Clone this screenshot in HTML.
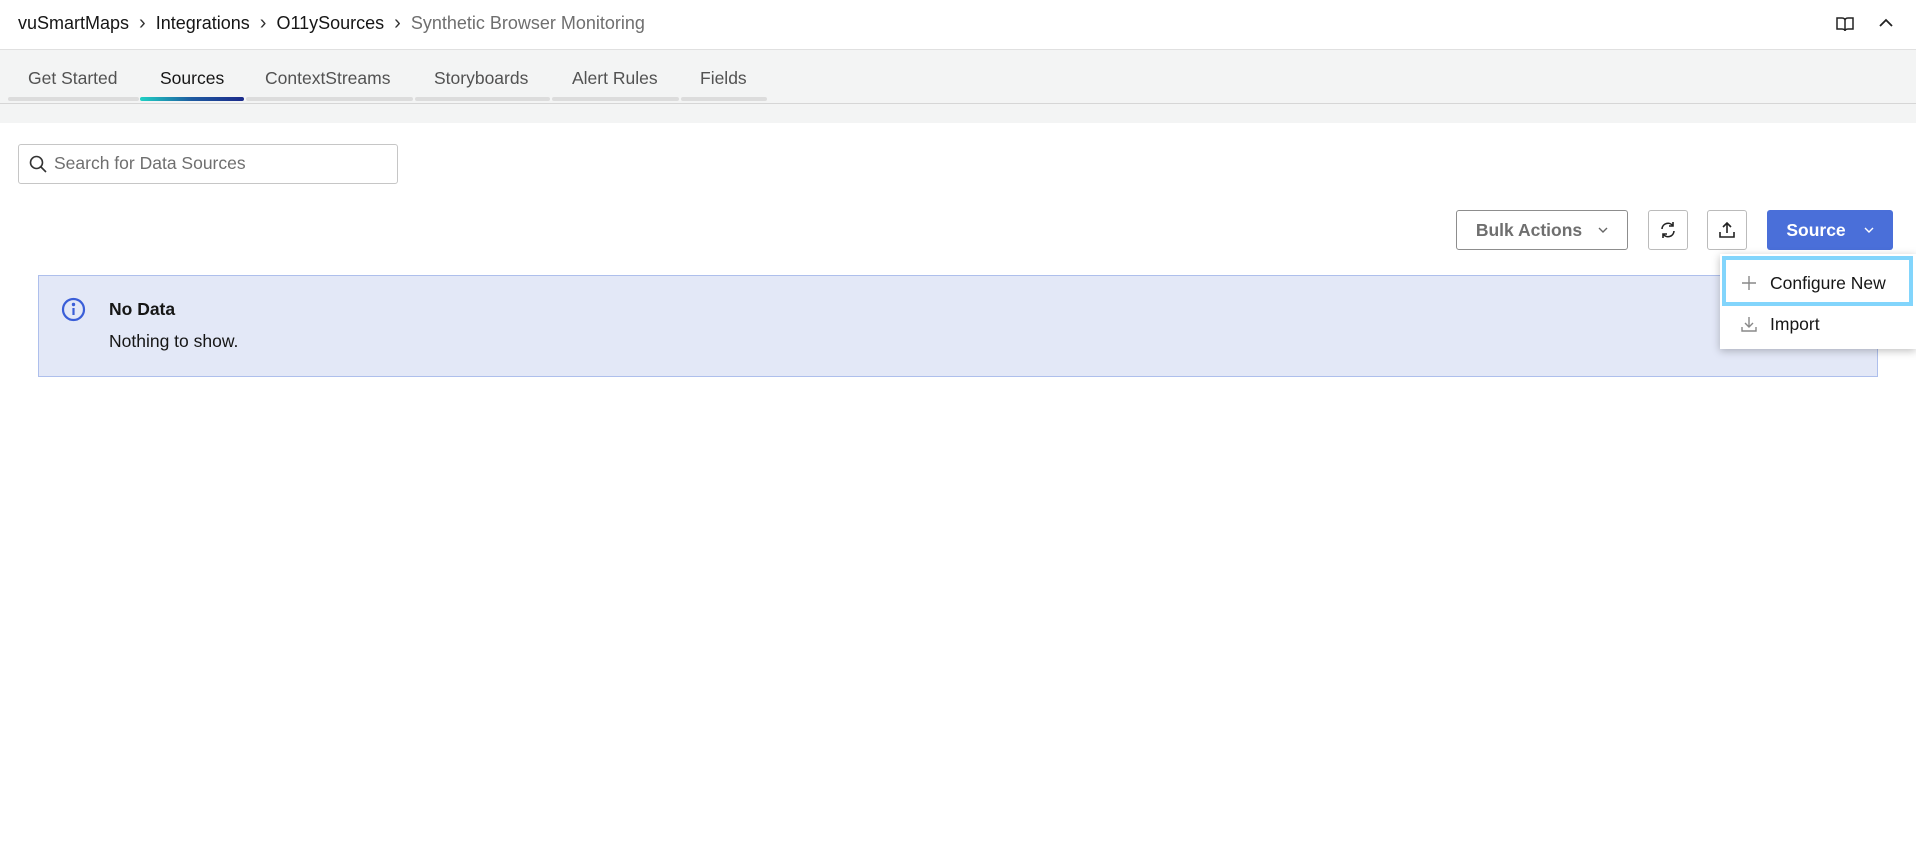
<!DOCTYPE html>
<html><head><meta charset="utf-8"><style>
*{box-sizing:border-box;margin:0;padding:0}
body{width:1916px;height:858px;background:#fff;font-family:"Liberation Sans",sans-serif;position:relative;overflow:hidden;color:#161616}
.abs{position:absolute}
.bc{top:12px;left:18px;font-size:18px;display:flex;align-items:center;gap:0;white-space:nowrap}
.bc span.sep{margin:0 10px;color:#333;font-size:20px}
.tabs{top:49px;left:0;width:1916px;height:74px;background:#f3f4f4;border-top:1px solid #e0e0e0}
.tabline{top:103px;left:0;width:1916px;height:1px;background:#d6d6d6}
.tab{position:absolute;top:18px;font-size:17.5px;color:#525252}
.bar{position:absolute;top:97px;height:4px;background:#dcdcdc;border-radius:2px}
.btn{position:absolute;border:1px solid #8d8d8d;border-radius:3px;background:#fff;display:flex;align-items:center;justify-content:center}
</style></head><body>
<div class="abs bc"><span>vuSmartMaps</span><span class="sep">›</span><span>Integrations</span><span class="sep">›</span><span>O11ySources</span><span class="sep">›</span><span style="color:#6f6f6f">Synthetic Browser Monitoring</span></div>
<svg class="abs" style="left:1836px;top:16px" width="18" height="16" viewBox="0 0 18 16" fill="none" stroke="#222" stroke-width="1.5"><path d="M1 2h5c2 0 3 1 3 2.5V15c0-1-1-2-3-2H1zM17 2h-5c-2 0-3 1-3 2.5V15c0-1 1-2 3-2h5z"/></svg>
<svg class="abs" style="left:1879px;top:18px" width="14" height="10" viewBox="0 0 14 10" fill="none" stroke="#222" stroke-width="1.8"><path d="M1 8l6-6 6 6"/></svg>
<div class="abs tabs">
<div class="tab" style="left:28px">Get Started</div>
<div class="tab" style="left:160px;color:#161616">Sources</div>
<div class="tab" style="left:265px">ContextStreams</div>
<div class="tab" style="left:434px">Storyboards</div>
<div class="tab" style="left:572px">Alert Rules</div>
<div class="tab" style="left:700px">Fields</div>
</div>
<div class="bar abs" style="left:8px;width:131px"></div>
<div class="bar abs" style="left:140px;width:104px;background:linear-gradient(90deg,#1fd1c4,#1e5aa0,#1b2a8a)"></div>
<div class="bar abs" style="left:246px;width:167px"></div>
<div class="bar abs" style="left:415px;width:135px"></div>
<div class="bar abs" style="left:552px;width:127px"></div>
<div class="bar abs" style="left:681px;width:86px"></div>
<div class="abs tabline"></div>
<div class="abs" style="left:18px;top:144px;width:380px;height:40px;border:1px solid #c6c6c6;border-radius:3px"></div>
<svg class="abs" style="left:29px;top:155px" width="18" height="18" viewBox="0 0 18 18" fill="none" stroke="#333" stroke-width="1.6"><circle cx="7.5" cy="7.5" r="6"/><path d="M12 12l5 5"/></svg>
<div class="abs" style="left:54px;top:153px;font-size:17.5px;color:#6f6f6f">Search for Data Sources</div>
<div class="btn" style="left:1456px;top:210px;width:172px;height:40px;font-size:17.5px;font-weight:bold;color:#6f6f6f;gap:16px">Bulk Actions <svg width="10" height="6" viewBox="0 0 10 6" fill="none" stroke="#666" stroke-width="1.4"><path d="M1 1l4 4 4-4"/></svg></div>
<div class="btn" style="left:1648px;top:210px;width:40px;height:40px;border-color:#bbb"><svg width="18" height="18" viewBox="0 0 18 18" fill="none" stroke="#222" stroke-width="1.6"><path d="M3 8a6 6 0 0 1 11-3M15 10a6 6 0 0 1-11 3"/><path d="M14 1v4h-4M4 17v-4h4"/></svg></div>
<div class="btn" style="left:1707px;top:210px;width:40px;height:40px;border-color:#bbb"><svg width="18" height="18" viewBox="0 0 18 18" fill="none" stroke="#222" stroke-width="1.6"><path d="M9 12V2M5 6l4-4 4 4M2 11v5h14v-5"/></svg></div>
<div class="abs" style="left:1767px;top:210px;width:126px;height:40px;background:#4a6fd9;border-radius:3px;color:#fff;font-weight:bold;font-size:17.5px;display:flex;align-items:center;justify-content:center;gap:18px">Source <svg width="10" height="6" viewBox="0 0 10 6" fill="none" stroke="#fff" stroke-width="1.4"><path d="M1 1l4 4 4-4"/></svg></div>
<div class="abs" style="left:38px;top:275px;width:1840px;height:102px;background:#e3e8f7;border:1px solid #aebfec"></div>
<svg class="abs" style="left:61px;top:297px" width="25" height="25" viewBox="0 0 25 25" fill="none" stroke="#3a5ed8" stroke-width="2.2"><circle cx="12.5" cy="12.5" r="10.5"/><path d="M12.5 11v7"/><circle cx="12.5" cy="7.5" r="0.6" fill="#3a5ed8"/></svg>
<div class="abs" style="left:109px;top:299px;font-size:17.5px;font-weight:bold">No Data</div>
<div class="abs" style="left:109px;top:331px;font-size:17.5px">Nothing to show.</div>
<div class="abs" style="left:1720px;top:254px;width:196px;height:95px;background:#fff;box-shadow:0 2px 8px rgba(0,0,0,.25)"></div>
<div class="abs" style="left:1722px;top:256px;width:191px;height:50px;border:4px solid #82d5fc"></div>
<svg class="abs" style="left:1742px;top:276px" width="14" height="14" viewBox="0 0 14 14" stroke="#888" stroke-width="1.4"><path d="M7 0v14M0 7h14"/></svg>
<div class="abs" style="left:1770px;top:273px;font-size:17.5px">Configure New</div>
<svg class="abs" style="left:1740px;top:315px" width="18" height="18" viewBox="0 0 18 18" fill="none" stroke="#888" stroke-width="1.4"><path d="M9 2v10M5 8l4 4 4-4M2 12v4h14v-4"/></svg>
<div class="abs" style="left:1770px;top:314px;font-size:17.5px">Import</div>
</body></html>
